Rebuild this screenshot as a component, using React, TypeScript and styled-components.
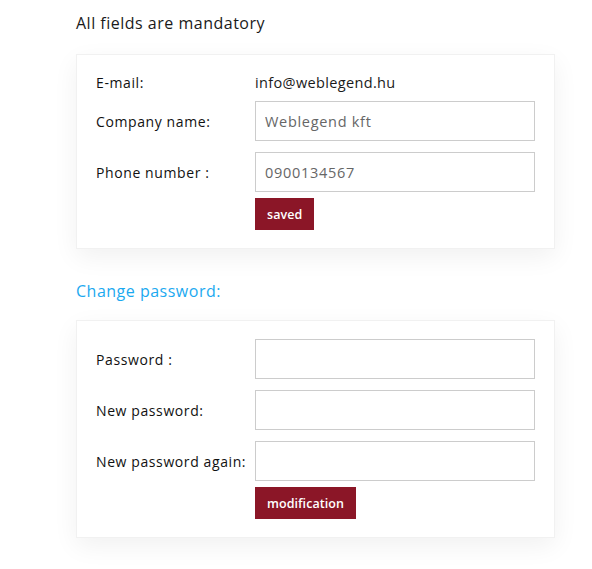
import * as React from 'react';
import styled, { createGlobalStyle } from 'styled-components';

const GlobalStyle = createGlobalStyle`
    html, body {
        margin: 0;
        padding: 0;
        background: #ffffff;
    }
    body {
        font-family: "Open Sans", "Noto Sans", sans-serif;
        color: #111111;
    }
`

const Page = styled.div`
    padding: 11px 37px 30px 76px;
    width: 479px;
`

const Heading = styled.h3<{ $accent?: boolean }>`
    margin: ${p => p.$accent ? '30px 0 17px' : '0 0 19px'};
    font-size: 16px;
    line-height: 24px;
    font-weight: 400;
    letter-spacing: 0.5px;
    color: ${p => p.$accent ? '#1ba9f0' : '#1a1a1a'};
`

const Card = styled.div`
    background: #ffffff;
    border: 1px solid #f1f1f1;
    box-shadow: 0 8px 24px rgba(0, 0, 0, 0.06);
    padding: 18px 19px 18px 19px;
`

const Row = styled.div<{ $gap?: number }>`
    display: flex;
    align-items: center;
    margin-bottom: ${p => p.$gap ?? 11}px;
`

const Label = styled.label`
    width: 159px;
    flex: none;
    font-size: 14px;
    line-height: 19px;
    letter-spacing: 0.6px;
    color: #111111;
    white-space: nowrap;
`

const Value = styled.span`
    font-size: 14.5px;
    line-height: 19px;
    letter-spacing: 0.35px;
    color: #1a1a1a;
`

const Input = styled.input`
    box-sizing: border-box;
    width: 280px;
    height: 40px;
    border: 1px solid #cccccc;
    padding: 0 9px;
    font-family: inherit;
    font-size: 14.5px;
    letter-spacing: 0.7px;
    color: #666666;
    outline: none;
    background: #ffffff;
`

const Button = styled.button`
    margin-left: 159px;
    height: 32px;
    padding: 0 12px;
    border: none;
    background: #8b1627;
    color: #ffffff;
    font-family: inherit;
    font-size: 12.5px;
    font-weight: 600;
    letter-spacing: 0.05px;
    cursor: pointer;
`

export default function App() {
    return <>
        <GlobalStyle />
        <Page>
            <Heading>All fields are mandatory</Heading>
            <Card>
                <Row $gap={9}>
                    <Label>E-mail:</Label>
                    <Value>info@weblegend.hu</Value>
                </Row>
                <Row>
                    <Label>Company name:</Label>
                    <Input defaultValue="Weblegend kft" />
                </Row>
                <Row $gap={6}>
                    <Label>Phone number :</Label>
                    <Input defaultValue="0900134567" />
                </Row>
                <Button>saved</Button>
            </Card>

            <Heading $accent>Change password:</Heading>
            <Card>
                <Row>
                    <Label>Password :</Label>
                    <Input type="password" />
                </Row>
                <Row>
                    <Label>New password:</Label>
                    <Input type="password" />
                </Row>
                <Row $gap={6}>
                    <Label>New password again:</Label>
                    <Input type="password" />
                </Row>
                <Button>modification</Button>
            </Card>
        </Page>
    </>
}
